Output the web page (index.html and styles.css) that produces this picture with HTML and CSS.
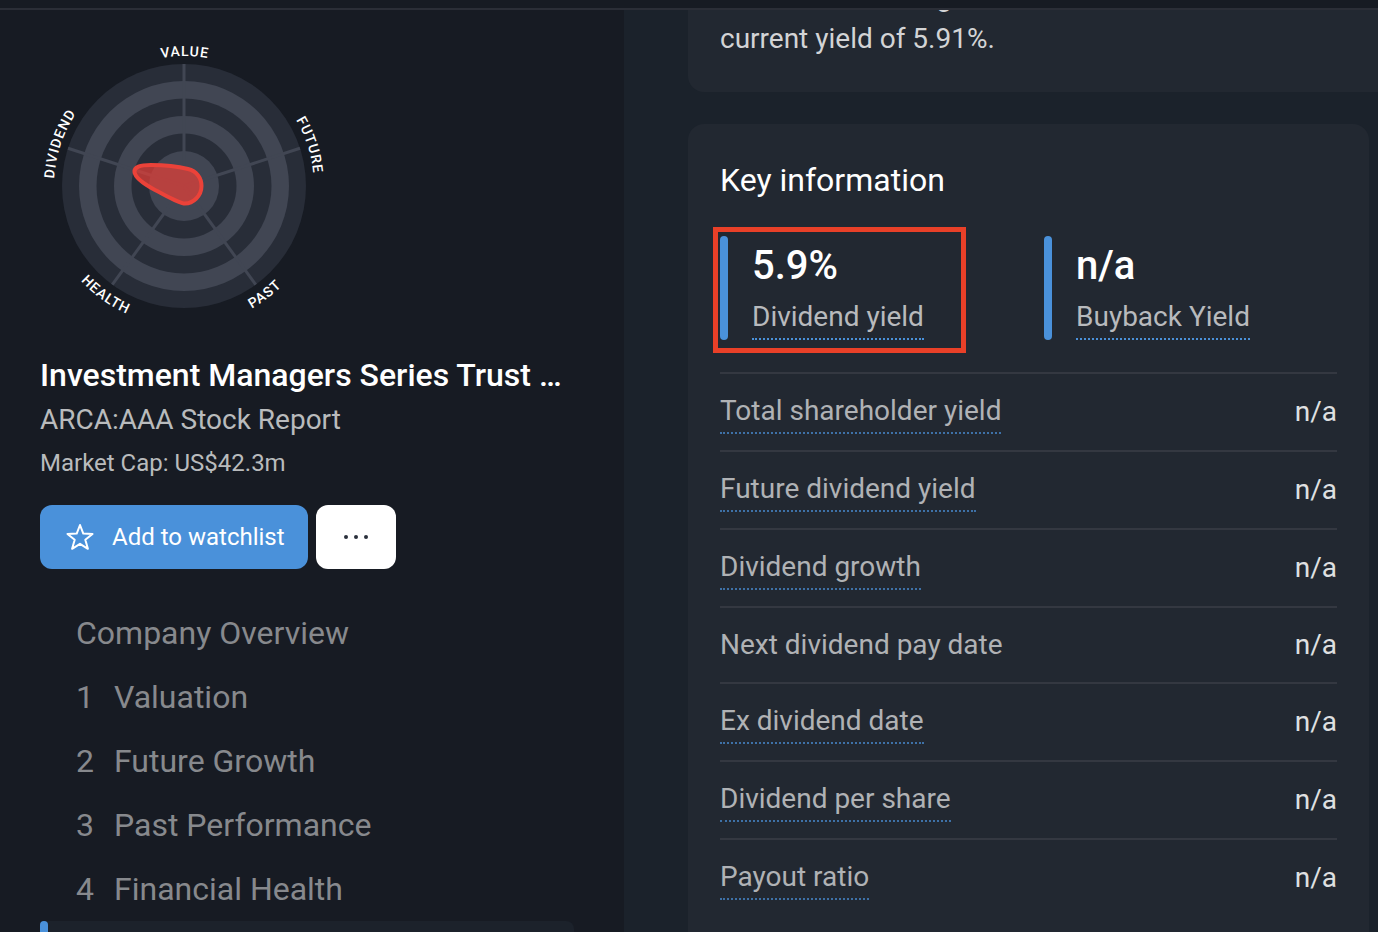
FILE: index.html
```html
<!DOCTYPE html>
<html lang="en">
<head>
  <meta charset="UTF-8">
  <meta name="viewport" content="width=device-width, initial-scale=1.0">
  <title>ARCA:AAA Stock Report</title>
  <link rel="stylesheet" href="styles.css">
</head>
<body>
  <div class="topbar"></div>

  <div class="layout">
    <aside class="sidebar">
      <!-- snowflake chart -->
      <svg class="snowflake" viewBox="-144 -144 288 288" role="img" aria-label="Snowflake score">
        <defs>
          <path id="arc-top" d="M0 130A130 130 0 0 1 0 -130A130 130 0 0 1 0 130"/>
          <path id="arc-bottom" d="M0 -140A140 140 0 0 0 0 140A140 140 0 0 0 0 -140"/>
        </defs>
        <circle class="ring-dark" r="122"/>
        <circle class="ring-light" r="105"/>
        <circle class="ring-dark" r="87.5"/>
        <circle class="ring-light" r="70"/>
        <circle class="ring-dark" r="52.5"/>
        <circle class="ring-light" r="35"/>
        <g class="spokes">
          <path d="M0 0V-122"/>
          <path d="M0 0L116 -37.7"/>
          <path d="M0 0L71.7 98.7"/>
          <path d="M0 0L-71.7 98.7"/>
          <path d="M0 0L-116 -37.7"/>
        </g>
        <path class="score" d="M-49.5 -14C-50 -19 -44 -21 -33 -21C-20 -21 -4 -19 4 -17C12.500 -15 17.500 -8 17.500 0C17.500 10 9 17.500 1 17.500C-5 17.500 -18 9.500 -29 4C-41 -2.500 -49 -9 -49.500 -14Z"/>
        <g class="chart-labels">
          <text><textPath href="#arc-top" startOffset="50.1%">VALUE</textPath></text>
          <text><textPath href="#arc-top" startOffset="70%">FUTURE</textPath></text>
          <text><textPath href="#arc-top" startOffset="30.2%">DIVIDEND</textPath></text>
          <text><textPath href="#arc-bottom" startOffset="40.1%">HEALTH</textPath></text>
          <text><textPath href="#arc-bottom" startOffset="60.2%">PAST</textPath></text>
        </g>
      </svg>

      <h1 class="company-name">Investment Managers Series Trust …</h1>
      <p class="company-ticker">ARCA:AAA Stock Report</p>
      <p class="company-cap">Market Cap: US$42.3m</p>

      <div class="actions">
        <button class="btn btn-watchlist" type="button">
          <svg class="icon-star" viewBox="0 0 28 28" aria-hidden="true">
            <path d="M14 2L17.300 10.600L26.500 11L19.300 16.800L21.900 25.800L14 20.800L6.100 25.800L8.700 16.800L1.500 11L10.700 10.600Z"/>
          </svg>
          Add to watchlist
        </button>
        <button class="btn btn-more" type="button" aria-label="More">
          <svg class="icon-dots" viewBox="0 0 24 4" aria-hidden="true">
            <circle cx="2" cy="2" r="2"/>
            <circle cx="12" cy="2" r="2"/>
            <circle cx="22" cy="2" r="2"/>
          </svg>
        </button>
      </div>

      <nav class="report-nav">
        <a href="#overview">Company Overview</a>
        <a href="#valuation"><span class="num">1</span>Valuation</a>
        <a href="#growth"><span class="num">2</span>Future Growth</a>
        <a href="#past"><span class="num">3</span>Past Performance</a>
        <a href="#health"><span class="num">4</span>Financial Health</a>
        <a href="#dividend" class="active" aria-label="Dividend"></a>
      </nav>
    </aside>

    <main class="content">
      <section class="card card-intro">
        <p>Investment Managers Series Trust<br>current yield of 5.91%.</p>
      </section>

      <section class="card card-key">
        <h2>Key information</h2>
        <div class="metrics">
          <div class="metric highlighted">
            <p class="metric-value">5.9%</p>
            <span class="hint">Dividend yield</span>
          </div>
          <div class="metric">
            <p class="metric-value">n/a</p>
            <span class="hint">Buyback Yield</span>
          </div>
        </div>
        <table class="key-table">
          <tbody>
            <tr><th scope="row"><span class="hint">Total shareholder yield</span></th><td>n/a</td></tr>
            <tr><th scope="row"><span class="hint">Future dividend yield</span></th><td>n/a</td></tr>
            <tr><th scope="row"><span class="hint">Dividend growth</span></th><td>n/a</td></tr>
            <tr><th scope="row"><span class="plain">Next dividend pay date</span></th><td>n/a</td></tr>
            <tr><th scope="row"><span class="hint">Ex dividend date</span></th><td>n/a</td></tr>
            <tr><th scope="row"><span class="hint">Dividend per share</span></th><td>n/a</td></tr>
            <tr><th scope="row"><span class="hint">Payout ratio</span></th><td>n/a</td></tr>
          </tbody>
        </table>
      </section>
    </main>
  </div>
</body>
</html>
```
FILE: styles.css
```css
*,
*::before,
*::after {
  box-sizing: border-box;
}
body {
  margin: 0;
  height: 100vh;
  display: flex;
  flex-direction: column;
  overflow: hidden;
  font-family: Roboto, "Liberation Sans", sans-serif;
  font-size: 28px;
  line-height: 42px;
  background: #1b222b;
  color: #fff;
}
h1, h2, p {
  margin: 0;
}

.topbar {
  flex: none;
  height: 10px;
  background: #171b23;
  border-bottom: 2px solid #2b2e37;
}
.layout {
  flex: 1;
  min-height: 0;
  display: flex;
}

/* sidebar */
.sidebar {
  flex: 0 0 624px;
  padding: 32px 50px 0 40px;
  background: #171b23;
  overflow: hidden;
}
.snowflake {
  display: block;
  width: 288px;
  height: 288px;
  margin-bottom: 23px;
}
.ring-dark {
  fill: #282d38;
}
.ring-light {
  fill: #414653;
}
.spokes {
  stroke: #414653;
  stroke-width: 3;
}
.score {
  fill: rgba(233, 63, 56, 0.7);
  stroke: #eb4239;
  stroke-width: 4;
  stroke-linejoin: round;
}
.chart-labels {
  fill: #fff;
  font-size: 14px;
  font-weight: 500;
  letter-spacing: 1px;
  text-anchor: middle;
}
.company-name {
  font-size: 32px;
  font-weight: 500;
  line-height: 44px;
  white-space: nowrap;
}
.company-ticker {
  line-height: 46px;
  color: #b9bbbd;
}
.company-cap {
  font-size: 24px;
  line-height: 40px;
  color: #b9bbbd;
}

.actions {
  display: flex;
  gap: 8px;
  margin: 22px 0 32px;
}
.btn {
  display: flex;
  align-items: center;
  justify-content: center;
  height: 64px;
  border: none;
  border-radius: 12px;
  font-family: inherit;
  font-size: 24px;
  cursor: pointer;
}
.btn-watchlist {
  justify-content: flex-start;
  gap: 18px;
  width: 268px;
  padding: 0 0 0 26px;
  background: #4a91da;
  color: #fff;
}
.btn-more {
  width: 80px;
  background: #fff;
}
.icon-star {
  width: 28px;
  height: 28px;
  fill: none;
  stroke: #fff;
  stroke-width: 2;
  stroke-linejoin: round;
}
.icon-dots {
  width: 24px;
  height: 4px;
  fill: #2b303b;
}

.report-nav {
  display: flex;
  flex-direction: column;
}
.report-nav a {
  display: flex;
  min-height: 64px;
  padding-left: 36px;
  font-size: 32px;
  line-height: 64px;
  color: #87898d;
  text-decoration: none;
}
.report-nav .num {
  width: 38px;
}
.report-nav .active {
  position: relative;
  border-radius: 8px;
  background: #1c222b;
}
.report-nav .active::before {
  content: "";
  position: absolute;
  left: 0;
  top: 0;
  bottom: 0;
  width: 8px;
  border-radius: 4px;
  background: #4a91da;
}

/* report */
.content {
  flex: 1;
  min-width: 0;
  display: flex;
  flex-direction: column;
  gap: 32px;
  padding-left: 64px;
  overflow: hidden;
}
.card {
  flex: none;
  padding: 32px;
  border-radius: 16px;
  background: #222831;
}
/* scrolled under the top bar */
.card-intro {
  margin-top: -66px;
  border-radius: 16px 0 0 16px;
  color: #d3d4d6;
}
.card-key {
  margin-right: 9px;
}
.card-key h2 {
  margin-bottom: 32px;
  font-size: 32px;
  font-weight: 400;
  line-height: 48px;
}

.hint {
  display: inline-block;
  vertical-align: top;
  border-bottom: 2px dotted #4a91da;
  color: #b8babd;
}
.metrics {
  display: grid;
  grid-template-columns: 1fr 1fr;
  gap: 31px;
  margin-bottom: 32px;
}
.metric {
  position: relative;
  padding-left: 32px;
}
.metric::before {
  content: "";
  position: absolute;
  left: 0;
  top: 0;
  bottom: 0;
  width: 8px;
  border-radius: 4px;
  background: #4a91da;
}
.metric-value {
  font-size: 40px;
  font-weight: 500;
  line-height: 60px;
}
.highlighted::after {
  content: "";
  position: absolute;
  left: -7px;
  top: -9px;
  width: 253px;
  height: 126px;
  border: 5px solid #e94028;
}

.key-table {
  width: 100%;
  border-spacing: 0;
}
.key-table th,
.key-table td {
  padding: 16px 0;
  border-top: 2px solid #343841;
  font-weight: 400;
  vertical-align: middle;
}
.key-table th {
  text-align: left;
  color: #b0b2b5;
}
.key-table td {
  text-align: right;
  color: #dfe0e1;
}
.key-table .hint {
  border-bottom-color: #3e71a7;
  color: inherit;
}
.key-table .plain {
  display: block;
}
```
